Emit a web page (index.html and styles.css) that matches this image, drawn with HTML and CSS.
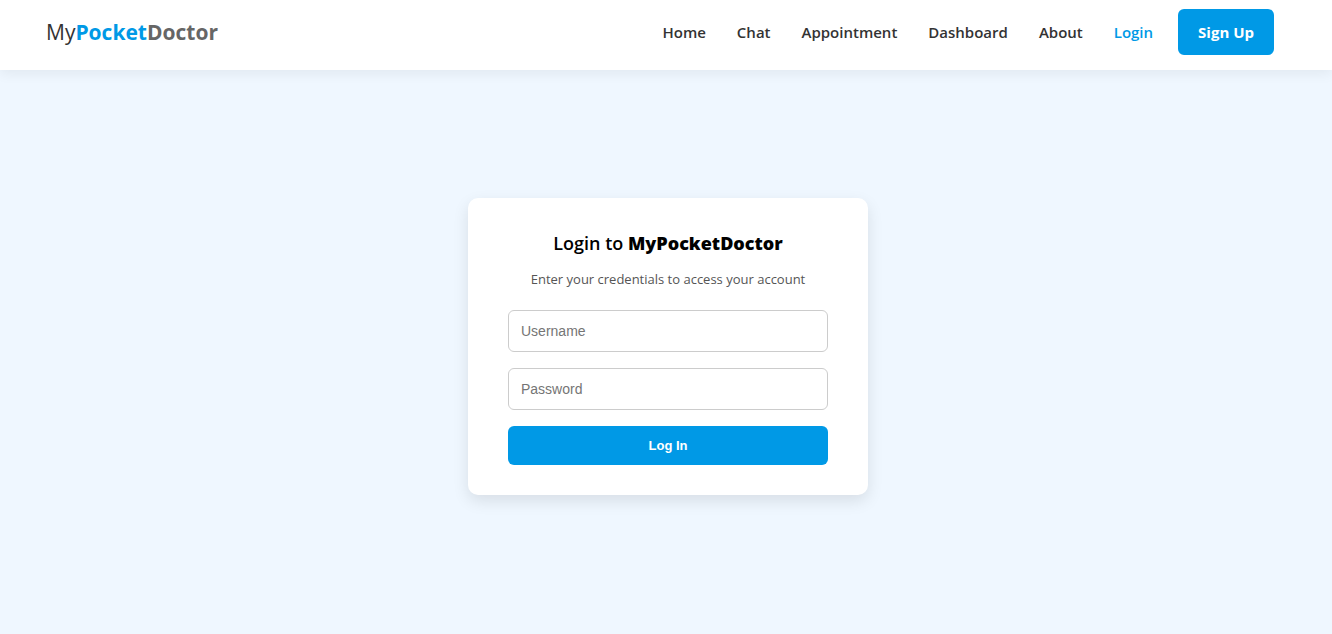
FILE: index.html
```html
<!DOCTYPE html>
<html lang="en">
<head>
  <meta charset="utf-8">
  <meta name="viewport" content="width=device-width, initial-scale=1">
  <title>Login - MyPocketDoctor</title>
  <link rel="stylesheet" href="styles.css">
</head>
<body>
  <header class="site-header">
    <a class="logo" href="#">My<span class="logo-pocket">Pocket</span><span class="logo-doctor">Doctor</span></a>
    <nav class="nav">
      <a class="nav-link" href="#">Home</a>
      <a class="nav-link" href="#">Chat</a>
      <a class="nav-link" href="#">Appointment</a>
      <a class="nav-link" href="#">Dashboard</a>
      <a class="nav-link" href="#">About</a>
      <a class="nav-link nav-link-active" href="#">Login</a>
      <a class="signup" href="#">Sign Up</a>
    </nav>
  </header>
  <main class="page">
    <form class="card">
      <h1 class="card-title">Login to <strong class="card-brand">MyPocketDoctor</strong></h1>
      <p class="card-text">Enter your credentials to access your account</p>
      <input class="field" type="text" placeholder="Username" aria-label="Username">
      <input class="field" type="password" placeholder="Password" aria-label="Password">
      <button class="submit" type="submit">Log In</button>
    </form>
  </main>
</body>
</html>
```
FILE: styles.css
```css
* {
  box-sizing: border-box;
}

body {
  margin: 0;
  min-height: 100vh;
  display: flex;
  flex-direction: column;
  background: #eff7ff;
  font-family: "Segoe UI", "Open Sans", sans-serif;
}

a {
  text-decoration: none;
}

.site-header {
  display: flex;
  flex-wrap: wrap;
  align-items: center;
  justify-content: space-between;
  padding: 9px 58px 15px 46px;
  background: #fff;
  box-shadow: 0 4px 12px rgba(0, 0, 0, 0.06);
}

.logo {
  color: #333;
  font-size: 21px;
  line-height: 30px;
}

.logo-pocket {
  color: #0099e6;
  font-weight: 700;
}

.logo-doctor {
  color: #666;
  font-weight: 700;
}

.nav {
  display: flex;
  flex-wrap: wrap;
  align-items: center;
  gap: 31px;
  font-size: 15px;
  line-height: 22px;
}

.nav-link {
  color: #333;
  font-weight: 600;
}

.nav-link-active {
  color: #0099e6;
}

.signup {
  margin-left: -6px;
  padding: 12px 20px;
  border-radius: 6px;
  background: #0099e6;
  color: #fff;
  font-weight: 700;
}

.page {
  flex: 1;
  display: flex;
  align-items: center;
  justify-content: center;
  padding: 16px 0 27px 4px;
}

.card {
  width: 400px;
  max-width: 100%;
  display: flex;
  flex-direction: column;
  gap: 16px;
  padding: 32px 40px 30px;
  border-radius: 10px;
  background: #fff;
  box-shadow: 0 6px 16px rgba(0, 0, 0, 0.1);
  text-align: center;
}

.card-title {
  margin: 0;
  color: #000;
  font-size: 18px;
  font-weight: 600;
  line-height: 26px;
}

.card-brand {
  font-weight: 800;
}

.card-text {
  margin: -4px 0 4px;
  color: #555;
  font-size: 13px;
  line-height: 22px;
}

.field {
  width: 100%;
  height: 42px;
  padding: 0 12px;
  border: 1px solid #ccc;
  border-radius: 6px;
  background: #fff;
  font-family: "Liberation Sans", Arial, sans-serif;
  font-size: 14px;
}

.field::placeholder {
  color: #757575;
}

.submit {
  height: 39px;
  border: 0;
  border-radius: 6px;
  background: #0099e6;
  color: #fff;
  font-family: "Liberation Sans", Arial, sans-serif;
  font-size: 13px;
  font-weight: 700;
}
```
